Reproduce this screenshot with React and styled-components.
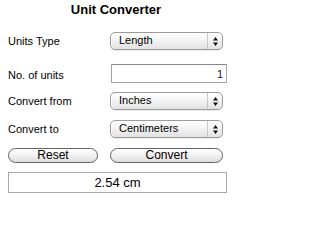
import styled, { createGlobalStyle } from "styled-components";

const GlobalStyle = createGlobalStyle`
  body {
    margin: 0;
    background: #fff;
    font-family: "Liberation Sans", Arial, sans-serif;
    color: #000;
  }
`;

const Arrows = () => (
  <svg width="5" height="9" viewBox="0 0 5 9">
    <polygon points="2.5,0 5,3.5 0,3.5" fill="#111" />
    <polygon points="0,5.5 5,5.5 2.5,9" fill="#111" />
  </svg>
);

const FakeSelect = ({ value }) => (
  <SelectBox>
    <SelectValue>{value}</SelectValue>
    <Stepper>
      <Arrows />
    </Stepper>
  </SelectBox>
);

const App = () => {
  return (
    <>
      <GlobalStyle />
      <Panel>
        <Title>Unit Converter</Title>
        <Row $top={15} $height={18}>
          <Label>Units Type</Label>
          <FakeSelect value="Length" />
        </Row>
        <Row $top={14} $height={18}>
          <Label $shift={2}>No. of units</Label>
          <NumberInput defaultValue="1" />
        </Row>
        <Row $top={10} $height={18}>
          <Label>Convert from</Label>
          <FakeSelect value="Inches" />
        </Row>
        <Row $top={10} $height={18}>
          <Label>Convert to</Label>
          <FakeSelect value="Centimeters" />
        </Row>
        <Row $top={10} $height={15}>
          <Button $narrow>Reset</Button>
          <Button>Convert</Button>
        </Row>
        <Result>2.54 cm</Result>
      </Panel>
    </>
  );
};

export default App;

const Panel = styled.div`
  width: 219px;
  padding: 2px 0 0 8px;
  display: flex;
  flex-direction: column;
`;

const Title = styled.h1`
  margin: 0;
  padding-right: 3px;
  font-size: 13px;
  line-height: 15px;
  font-weight: bold;
  text-align: center;
`;

const Row = styled.div`
  display: grid;
  grid-template-columns: 102px 1fr;
  align-items: center;
  height: ${(p) => p.$height}px;
  margin-top: ${(p) => p.$top}px;
`;

const Label = styled.label`
  font-size: 11px;
  line-height: 13px;
  position: relative;
  top: ${(p) => p.$shift || 0}px;
`;

const SelectBox = styled.div`
  display: flex;
  align-items: stretch;
  height: 18px;
  margin-right: 4px;
  box-sizing: border-box;
  border: 1px solid #9c9c9c;
  border-radius: 5px;
  background: linear-gradient(#ffffff, #f2f2f2 50%, #e2e2e2);
  box-shadow: inset 1px 0 0 #fff, 0 1px 0 rgba(0, 0, 0, 0.08);
`;

const SelectValue = styled.span`
  flex: 1;
  padding-left: 8px;
  font-size: 11px;
  line-height: 15px;
`;

const Stepper = styled.span`
  width: 13px;
  display: flex;
  align-items: center;
  justify-content: center;
  border-left: 1px solid #c8c8c8;
  padding-left: 1px;
`;

const NumberInput = styled.input`
  height: 19px;
  width: 116px;
  margin: 0 0 0 1px;
  box-sizing: border-box;
  border: 1px solid #a5a5a5;
  border-top-color: #888;
  padding: 0 3px 0 0;
  font-family: inherit;
  font-size: 11px;
  text-align: right;
  color: #1a1030;
  outline: none;
`;

const Button = styled.button`
  height: 15px;
  width: ${(p) => (p.$narrow ? "90px" : "113px")};
  box-sizing: border-box;
  border: 1px solid #626262;
  border-radius: 8px;
  background: linear-gradient(#ffffff, #f0f0f0 55%, #dcdcdc);
  padding: 0;
  font-family: inherit;
  font-size: 12px;
  line-height: 13px;
  color: #000;
`;

const Result = styled.div`
  margin-top: 9px;
  height: 21px;
  box-sizing: border-box;
  border: 1px solid #a8a8a8;
  font-size: 13px;
  line-height: 19px;
  text-align: center;
`;
